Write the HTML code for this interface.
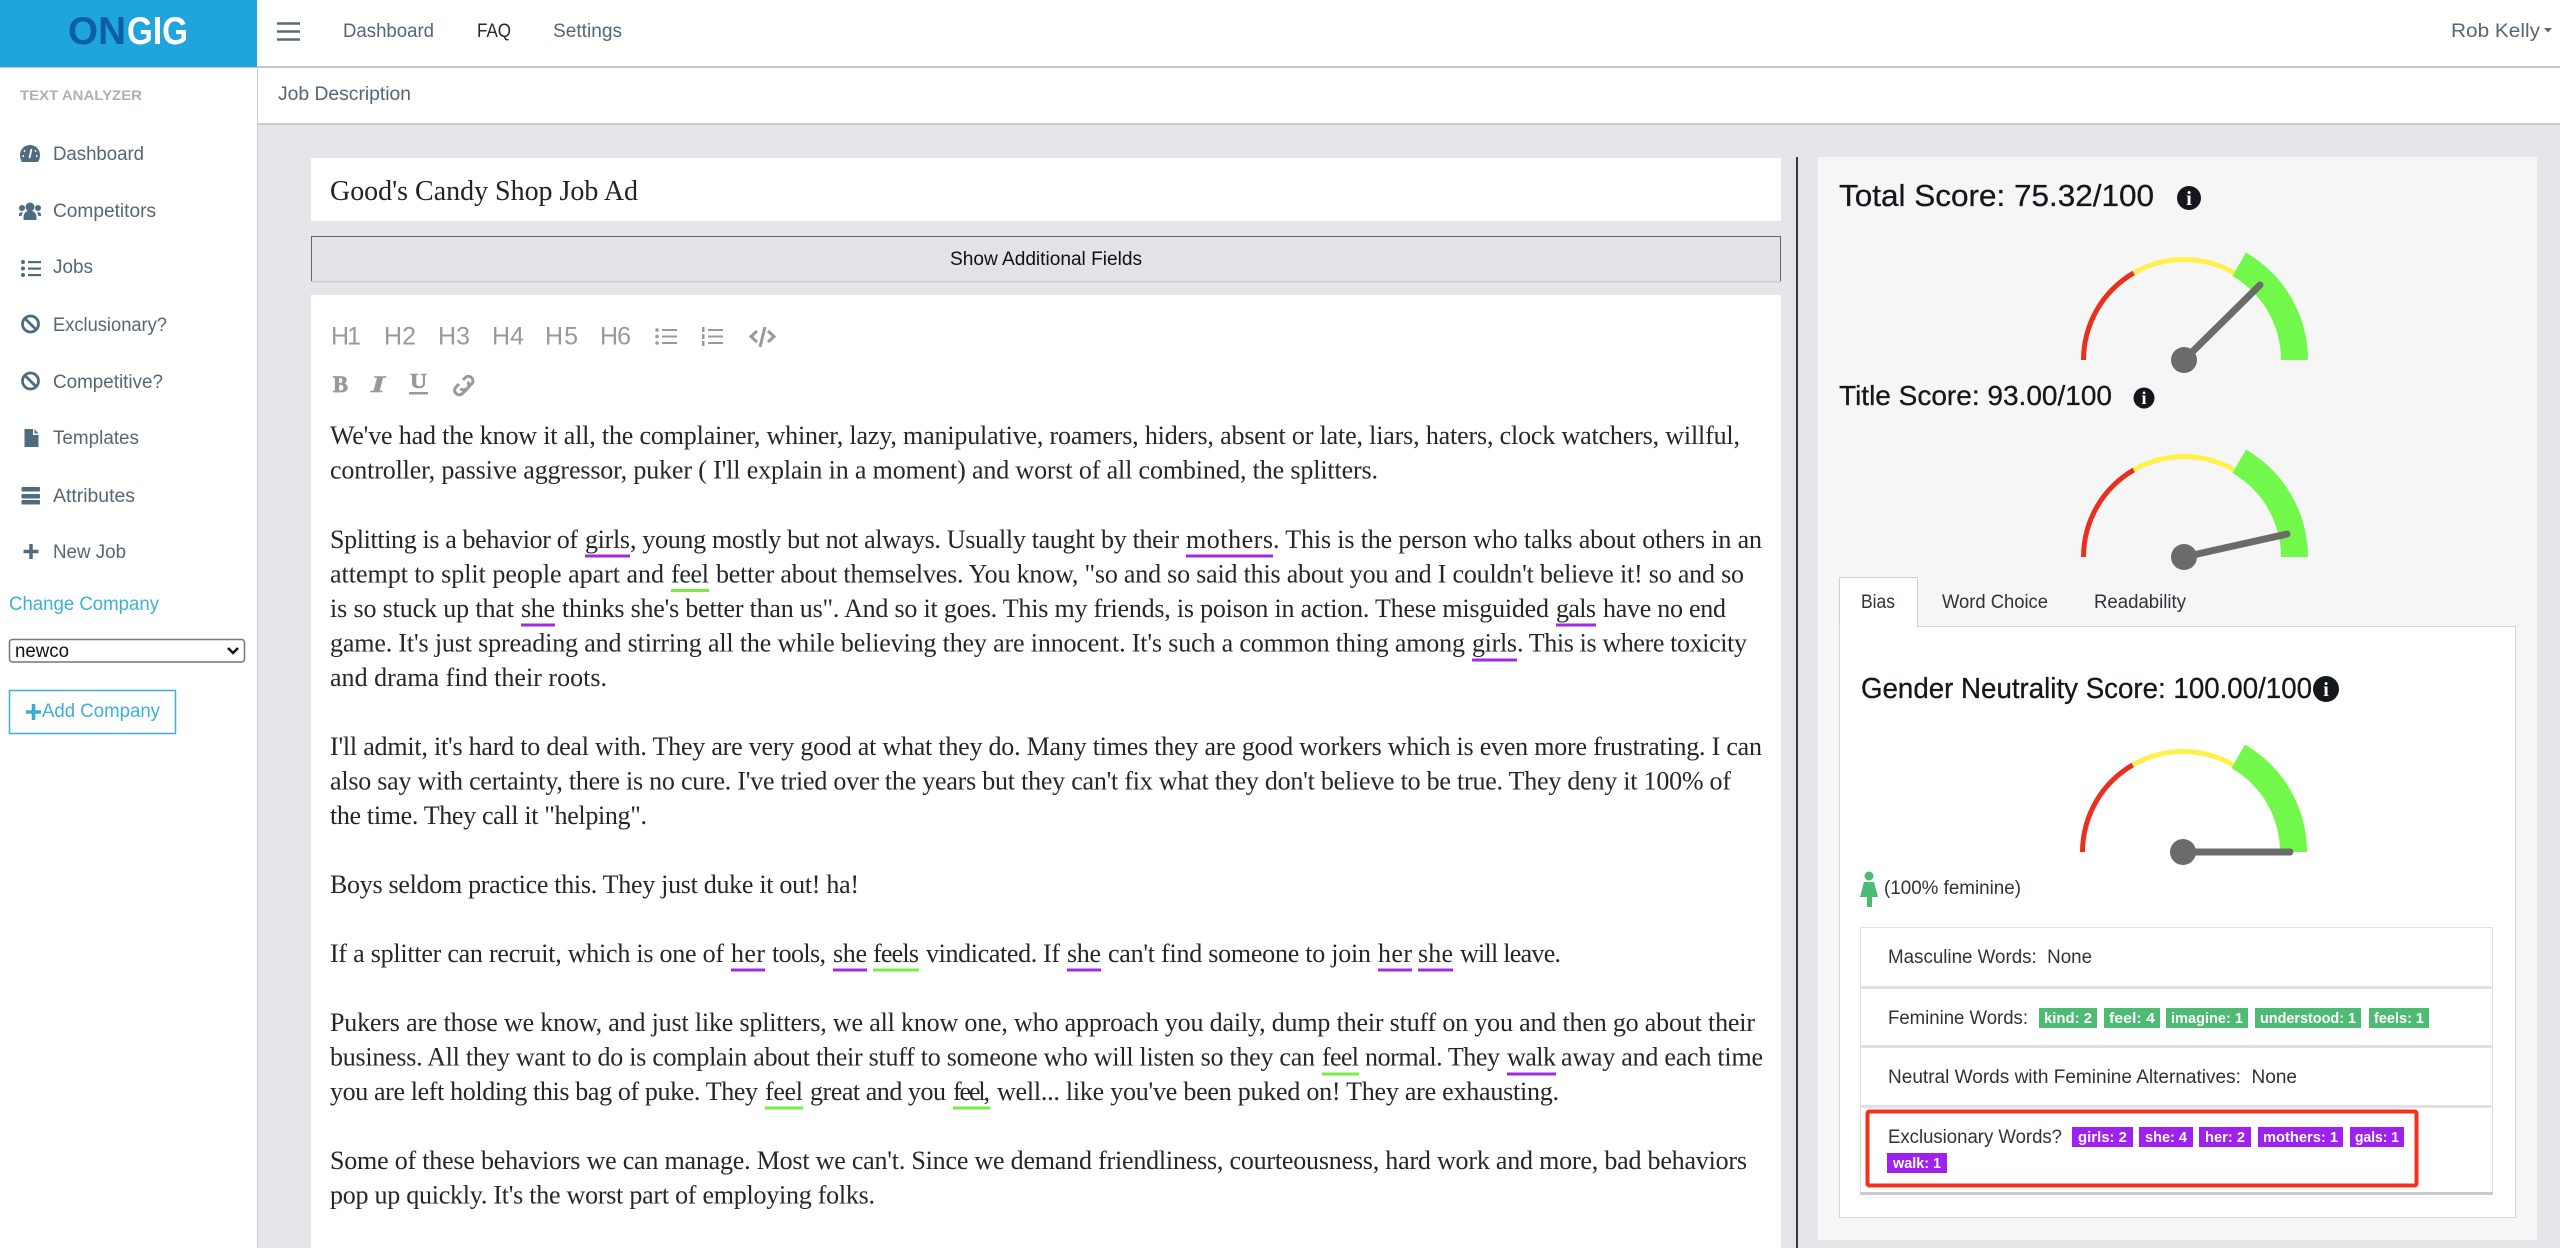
<!DOCTYPE html>
<html lang="en"><head><meta charset="utf-8"><title>Ongig Text Analyzer</title>
<style>
html,body{margin:0;padding:0;background:#e4e6e9;width:2560px;height:1248px;overflow:hidden}
svg{display:block}
text{white-space:pre}
.s{font-family:"Liberation Sans",sans-serif;font-size:19px;fill:#566673}
.b{font-family:"Liberation Serif",serif;font-size:26px;fill:#262626}
.d{font-family:"Liberation Sans",sans-serif;font-size:19px;fill:#2d3338}
.h{font-family:"Liberation Sans",sans-serif;font-size:31px;fill:#14181d;stroke:#14181d;stroke-width:.3px}
.t{font-family:"Liberation Sans",sans-serif;font-size:25px;fill:#999}
.g{font-family:"Liberation Sans",sans-serif;font-size:15px;font-weight:bold;fill:#fff}
.ic{fill:#4f6b80}
</style></head><body>
<svg xmlns="http://www.w3.org/2000/svg" width="2560" height="1248" viewBox="0 0 2560 1248">
<!-- backgrounds -->
<rect width="2560" height="1248" fill="#e4e6e9"/>
<rect x="0" y="0" width="2560" height="67" fill="#fff"/>
<rect x="0" y="66" width="2560" height="2" fill="#c3c9ce"/>
<rect x="0" y="0" width="257" height="67" fill="#1fa5db"/>
<rect x="0" y="68" width="257" height="1180" fill="#fff"/>
<rect x="257" y="68" width="1" height="1180" fill="#c8ced3"/>
<rect x="258" y="68" width="2302" height="56" fill="#fff"/>
<rect x="258" y="123" width="2302" height="2" fill="#c8ced3"/>
<!-- logo -->
<text x="68" y="44" textLength="58" lengthAdjust="spacingAndGlyphs" font-family="Liberation Sans, sans-serif" font-size="39" font-weight="bold" fill="#0d5ea4">ON</text>
<text x="127" y="44" textLength="61" lengthAdjust="spacingAndGlyphs" font-family="Liberation Sans, sans-serif" font-size="39" font-weight="bold" fill="#fff">GIG</text>
<!-- top nav -->
<path d="M277 23.500H300M277 31.500H300M277 39.500H300" stroke="#5c6b77" stroke-width="2.500"/>
<text class="s" x="343" y="37" textLength="91" lengthAdjust="spacingAndGlyphs">Dashboard</text>
<text class="s" x="477" y="37" textLength="34" lengthAdjust="spacingAndGlyphs" style="fill:#23282c">FAQ</text>
<text class="s" x="553" y="37" textLength="69" lengthAdjust="spacingAndGlyphs">Settings</text>
<text class="s" x="2451" y="37" textLength="89" lengthAdjust="spacingAndGlyphs">Rob Kelly</text>
<path d="M2544 28l8 0l-4 4.500z" fill="#566673"/>
<text class="s" x="278" y="100" textLength="133" lengthAdjust="spacingAndGlyphs">Job Description</text>
<!-- sidebar -->
<text x="20" y="100" textLength="122" lengthAdjust="spacingAndGlyphs" font-family="Liberation Sans, sans-serif" font-size="14" font-weight="bold" fill="#a9b1b7">TEXT ANALYZER</text>
<text class="s" x="53" y="160" textLength="91" lengthAdjust="spacingAndGlyphs">Dashboard</text>
<text class="s" x="53" y="217" textLength="103" lengthAdjust="spacingAndGlyphs">Competitors</text>
<text class="s" x="53" y="273" textLength="40" lengthAdjust="spacingAndGlyphs">Jobs</text>
<text class="s" x="53" y="331" textLength="114" lengthAdjust="spacingAndGlyphs">Exclusionary?</text>
<text class="s" x="53" y="388" textLength="110" lengthAdjust="spacingAndGlyphs">Competitive?</text>
<text class="s" x="53" y="444" textLength="86" lengthAdjust="spacingAndGlyphs">Templates</text>
<text class="s" x="53" y="502" textLength="82" lengthAdjust="spacingAndGlyphs">Attributes</text>
<text class="s" x="53" y="558" textLength="73" lengthAdjust="spacingAndGlyphs">New Job</text>
<!-- sidebar icons -->
<path class="ic" d="M30 145a10 10 0 0 0-10 10c0 2.800.8 5.200 2 7h16c1.200-1.800 2-4.200 2-7a10 10 0 0 0-10-10z"/>
<path d="M29.500 158l2-9M24 150.500l1 1M36 150.500l-1 1M22.500 156h1.500M36 156h1.500" stroke="#fff" stroke-width="1.800"/>
<g class="ic"><circle cx="30" cy="207" r="4.500"/><circle cx="22" cy="208" r="3"/><circle cx="38" cy="208" r="3"/><path d="M23.500 220v-3a6 6 0 0 1 13 0v3zM19 216v-2a3 3 0 0 1 4-1.500 8 8 0 0 0-1.500 3.500zM41 216v-2a3 3 0 0 0-4-1.500 8 8 0 0 1 1.500 3.500z"/></g>
<g class="ic"><circle cx="23" cy="262" r="2"/><circle cx="23" cy="268.500" r="2"/><circle cx="23" cy="275" r="2"/><rect x="28" y="261" width="13" height="2.200"/><rect x="28" y="267.500" width="13" height="2.200"/><rect x="28" y="274" width="13" height="2.200"/></g>
<g fill="none" stroke="#4f6b80" stroke-width="2.800"><circle cx="30.500" cy="324" r="8"/><path d="M25 318.500l11 11"/><circle cx="30.500" cy="381" r="8"/><path d="M25 375.500l11 11"/></g>
<path class="ic" d="M24.500 429h8.500v6h5.500v12h-14z"/><path d="M34.500 429l4 4.500h-4z" class="ic"/>
<g class="ic"><rect x="21.500" y="487" width="18.500" height="4.500" rx="1"/><rect x="21.500" y="494" width="18.500" height="4.500" rx="1"/><rect x="21.500" y="500" width="18.500" height="4.500" rx="1"/></g>
<path d="M31 544v15M23.500 551.500h15" stroke="#4f6b80" stroke-width="3.500"/>
<!-- company -->
<text x="9" y="610" textLength="150" lengthAdjust="spacingAndGlyphs" font-family="Liberation Sans, sans-serif" font-size="19" fill="#3fb0d5">Change Company</text>
<rect x="9.500" y="639.500" width="235" height="22.500" rx="3" fill="#fff" stroke="#777" stroke-width="1.500"/>
<text x="15" y="657" textLength="54" lengthAdjust="spacingAndGlyphs" font-family="Liberation Sans, sans-serif" font-size="19" fill="#111">newco</text>
<path d="M228 648l5 5 5-5" fill="none" stroke="#111" stroke-width="2.500"/>
<rect x="9.500" y="690.500" width="166" height="43" fill="#fff" stroke="#3fb0d5" stroke-width="1.500"/>
<path d="M33.500 704v16M26 712h15" stroke="#35aed6" stroke-width="3.500"/>
<text x="42" y="717" textLength="118" lengthAdjust="spacingAndGlyphs" font-family="Liberation Sans, sans-serif" font-size="19" fill="#3fb0d5">Add Company</text>
<!-- title card -->
<rect x="311" y="158" width="1470" height="63" fill="#fff"/>
<text x="330" y="200" textLength="308" lengthAdjust="spacingAndGlyphs" font-family="Liberation Serif, serif" font-size="29" fill="#222">Good's Candy Shop Job Ad</text>
<!-- show additional -->
<rect x="311" y="237" width="1470" height="44" fill="#e1e3e6"/>
<path d="M311.500 282V236.500H1780.500V282" fill="none" stroke="#666" stroke-width="1"/>
<rect x="311" y="281" width="1470" height="1.500" fill="#c8ccd1"/>
<text x="950" y="265" textLength="192" lengthAdjust="spacingAndGlyphs" font-family="Liberation Sans, sans-serif" font-size="19" fill="#111">Show Additional Fields</text>
<!-- editor -->
<rect x="311" y="295" width="1470" height="953" fill="#fff"/>
<text class="t" x="331" y="344.500" textLength="30">H1</text>
<text class="t" x="384" y="344.500" textLength="32">H2</text>
<text class="t" x="438" y="344.500" textLength="32">H3</text>
<text class="t" x="492" y="344.500" textLength="32">H4</text>
<text class="t" x="545" y="344.500" textLength="33">H5</text>
<text class="t" x="600" y="344.500" textLength="31">H6</text>
<g fill="#999"><circle cx="657" cy="330" r="1.800"/><circle cx="657" cy="336.500" r="1.800"/><circle cx="657" cy="343" r="1.800"/><rect x="662" y="329" width="15" height="2"/><rect x="662" y="335.500" width="15" height="2"/><rect x="662" y="342" width="15" height="2"/><rect x="702" y="327" width="2.500" height="5"/><rect x="702" y="334" width="2.500" height="5"/><rect x="702" y="341" width="2.500" height="5"/><rect x="708" y="329" width="15" height="2"/><rect x="708" y="335.500" width="15" height="2"/><rect x="708" y="342" width="15" height="2"/></g>
<path d="M757 331l-6 5.500 6 5.500M768 331l6 5.500-6 5.500M765 327l-5 20" fill="none" stroke="#999" stroke-width="3"/>
<text x="333" y="392" textLength="15" lengthAdjust="spacingAndGlyphs" stroke="#999" stroke-width=".8" font-family="Liberation Serif, serif" font-weight="bold" font-size="23" fill="#999">B</text>
<text x="371" y="392" textLength="14" lengthAdjust="spacingAndGlyphs" stroke="#999" stroke-width=".6" font-family="Liberation Serif, serif" font-weight="bold" font-style="italic" font-size="23" fill="#999">I</text>
<text x="410" y="388" textLength="17" lengthAdjust="spacingAndGlyphs" stroke="#999" stroke-width=".6" font-family="Liberation Serif, serif" font-weight="bold" font-size="21" fill="#999">U</text>
<rect x="409" y="392" width="19" height="2.500" fill="#999"/>
<path d="M461 386l-3 3a4.500 4.500 0 0 0 6.500 6.500l5-5a4.500 4.500 0 0 0 0-6.500M465 382l3-3a4.500 4.500 0 0 1 6 6.500l-5 5a4.500 4.500 0 0 1-6.500 0" transform="translate(-2 -2)" fill="none" stroke="#999" stroke-width="3"/>
<!-- body -->
<text class="b" x="330" y="444" textLength="1410">We've had the know it all, the complainer, whiner, lazy, manipulative, roamers, hiders, absent or late, liars, haters, clock watchers, willful,</text>
<text class="b" x="330" y="478.500" textLength="1048">controller, passive aggressor, puker ( I'll explain in a moment) and worst of all combined, the splitters.</text>

<text class="b" x="330" y="548" textLength="248">Splitting is a behavior of</text>
<text class="b" x="585" y="548" textLength="45">girls</text>
<text class="b" x="630" y="548" textLength="549">, young mostly but not always. Usually taught by their</text>
<text class="b" x="1186" y="548" textLength="87">mothers</text>
<text class="b" x="1273" y="548" textLength="489">. This is the person who talks about others in an</text>

<text class="b" x="330" y="582.500" textLength="334">attempt to split people apart and</text>
<text class="b" x="671" y="582.500" textLength="38">feel</text>
<text class="b" x="716" y="582.500" textLength="1028">better about themselves. You know, "so and so said this about you and I couldn't believe it! so and so</text>

<text class="b" x="330" y="617" textLength="184">is so stuck up that</text>
<text class="b" x="521" y="617" textLength="34">she</text>
<text class="b" x="562" y="617" textLength="987">thinks she's better than us". And so it goes. This my friends, is poison in action. These misguided</text>
<text class="b" x="1556" y="617" textLength="40">gals</text>
<text class="b" x="1603" y="617" textLength="123">have no end</text>

<text class="b" x="330" y="651.500" textLength="1135">game. It's just spreading and stirring all the while believing they are innocent. It's such a common thing among</text>
<text class="b" x="1472" y="651.500" textLength="45">girls</text>
<text class="b" x="1517" y="651.500" textLength="230">. This is where toxicity</text>

<text class="b" x="330" y="686" textLength="277">and drama find their roots.</text>
<text class="b" x="330" y="755" textLength="1432">I'll admit, it's hard to deal with. They are very good at what they do. Many times they are good workers which is even more frustrating. I can</text>
<text class="b" x="330" y="789.500" textLength="1401">also say with certainty, there is no cure. I've tried over the years but they can't fix what they don't believe to be true. They deny it 100% of</text>
<text class="b" x="330" y="824" textLength="317">the time. They call it "helping".</text>
<text class="b" x="330" y="893" textLength="529">Boys seldom practice this. They just duke it out! ha!</text>

<text class="b" x="330" y="962" textLength="394">If a splitter can recruit, which is one of</text>
<text class="b" x="731" y="962" textLength="34">her</text>
<text class="b" x="772" y="962" textLength="54">tools,</text>
<text class="b" x="833" y="962" textLength="34">she</text>
<text class="b" x="873" y="962" textLength="46">feels</text>
<text class="b" x="926" y="962" textLength="134">vindicated. If</text>
<text class="b" x="1067" y="962" textLength="34">she</text>
<text class="b" x="1108" y="962" textLength="263">can't find someone to join</text>
<text class="b" x="1378" y="962" textLength="34">her</text>
<text class="b" x="1418" y="962" textLength="35">she</text>
<text class="b" x="1460" y="962" textLength="101">will leave.</text>

<text class="b" x="330" y="1031" textLength="1425">Pukers are those we know, and just like splitters, we all know one, who approach you daily, dump their stuff on you and then go about their</text>

<text class="b" x="330" y="1065.500" textLength="985">business. All they want to do is complain about their stuff to someone who will listen so they can</text>
<text class="b" x="1322" y="1065.500" textLength="37">feel</text>
<text class="b" x="1365" y="1065.500" textLength="135">normal. They</text>
<text class="b" x="1507" y="1065.500" textLength="49">walk</text>
<text class="b" x="1561" y="1065.500" textLength="202">away and each time</text>

<text class="b" x="330" y="1100" textLength="428">you are left holding this bag of puke. They</text>
<text class="b" x="765" y="1100" textLength="38">feel</text>
<text class="b" x="810" y="1100" textLength="136">great and you</text>
<text class="b" x="953" y="1100" textLength="37">feel,</text>
<text class="b" x="997" y="1100" textLength="562">well... like you've been puked on! They are exhausting.</text>

<text class="b" x="330" y="1169" textLength="1417">Some of these behaviors we can manage. Most we can't. Since we demand friendliness, courteousness, hard work and more, bad behaviors</text>
<text class="b" x="330" y="1203.500" textLength="545">pop up quickly. It's the worst part of employing folks.</text>
<!-- underlines -->
<g fill="#a02be0">
<rect x="585" y="554.500" width="45" height="3"/><rect x="1186" y="554.500" width="87" height="3"/>
<rect x="521" y="623.500" width="34" height="3"/><rect x="1556" y="623.500" width="40" height="3"/>
<rect x="1472" y="658.500" width="45" height="3"/>
<rect x="731" y="968.500" width="34" height="3"/><rect x="833" y="968.500" width="34" height="3"/><rect x="1067" y="968.500" width="34" height="3"/><rect x="1378" y="968.500" width="34" height="3"/><rect x="1418" y="968.500" width="35" height="3"/>
<rect x="1507" y="1072.500" width="49" height="3"/>
</g>
<g fill="#75ee45">
<rect x="671" y="589" width="38" height="3"/><rect x="873" y="968.500" width="46" height="3"/>
<rect x="1322" y="1072.500" width="37" height="3"/><rect x="765" y="1106.500" width="38" height="3"/><rect x="953" y="1106.500" width="37" height="3"/>
</g>
<!-- divider and panel -->
<rect x="1796" y="157" width="2" height="1091" fill="#33383c"/>
<rect x="1818" y="157" width="719" height="1083" fill="#f6f6f6"/>
<text class="h" x="1839" y="206" textLength="315" lengthAdjust="spacingAndGlyphs">Total Score: 75.32/100</text>
<circle cx="2189" cy="198" r="12" fill="#14181d"/>
<text x="2189" y="205" text-anchor="middle" font-family="Liberation Serif, serif" font-weight="bold" font-size="20" fill="#fff">i</text>
<g transform="translate(2184 360)">
<path d="M-103 0A103 103 0 0 1 -51.500 -89.200L-49 -84.900A98 98 0 0 0 -98 0Z" fill="#e9301f"/>
<path d="M-51.500 -89.200A103 103 0 0 1 51.500 -89.200L49 -84.900A98 98 0 0 0 -49 -84.900Z" fill="#fdf14a"/>
<path d="M62 -107.400A124 124 0 0 1 124 0L97 0A97 97 0 0 0 48.500 -84Z" fill="#72f84a"/>
<path d="M0 0L76 -75" stroke="#6b6b6b" stroke-width="7" stroke-linecap="round"/>
<circle r="13" fill="#6b6b6b"/>
</g>
<text class="h" x="1839" y="405" textLength="273" lengthAdjust="spacingAndGlyphs" style="font-size:28px">Title Score: 93.00/100</text>
<circle cx="2144" cy="398" r="10.500" fill="#14181d"/>
<text x="2144" y="404" text-anchor="middle" font-family="Liberation Serif, serif" font-weight="bold" font-size="18" fill="#fff">i</text>
<g transform="translate(2184 557)">
<path d="M-103 0A103 103 0 0 1 -51.500 -89.200L-49 -84.900A98 98 0 0 0 -98 0Z" fill="#e9301f"/>
<path d="M-51.500 -89.200A103 103 0 0 1 51.500 -89.200L49 -84.900A98 98 0 0 0 -49 -84.900Z" fill="#fdf14a"/>
<path d="M62 -107.400A124 124 0 0 1 124 0L97 0A97 97 0 0 0 48.500 -84Z" fill="#72f84a"/>
<path d="M0 0L103 -23" stroke="#6b6b6b" stroke-width="7" stroke-linecap="round"/>
<circle r="13" fill="#6b6b6b"/>
</g>
<!-- tabs -->
<rect x="1839.500" y="626.500" width="676" height="591" fill="#fff" stroke="#d0d6db"/>
<path d="M1839.500 627V577.500H1917.500V627" fill="#fff" stroke="#c9d1d8"/>
<rect x="1840" y="625" width="77" height="3" fill="#fff"/>
<text class="d" x="1861" y="608" textLength="34" lengthAdjust="spacingAndGlyphs">Bias</text>
<text class="d" x="1942" y="608" textLength="106" lengthAdjust="spacingAndGlyphs">Word Choice</text>
<text class="d" x="2094" y="608" textLength="92" lengthAdjust="spacingAndGlyphs">Readability</text>
<text class="h" x="1861" y="698" textLength="451" lengthAdjust="spacingAndGlyphs" style="font-size:29px">Gender Neutrality Score: 100.00/100</text>
<circle cx="2326" cy="689" r="13" fill="#14181d"/>
<text x="2326" y="696" text-anchor="middle" font-family="Liberation Serif, serif" font-weight="bold" font-size="20" fill="#fff">i</text>
<g transform="translate(2183 852)">
<path d="M-103 0A103 103 0 0 1 -51.500 -89.200L-49 -84.900A98 98 0 0 0 -98 0Z" fill="#e9301f"/>
<path d="M-51.500 -89.200A103 103 0 0 1 51.500 -89.200L49 -84.900A98 98 0 0 0 -49 -84.900Z" fill="#fdf14a"/>
<path d="M62 -107.400A124 124 0 0 1 124 0L97 0A97 97 0 0 0 48.500 -84Z" fill="#72f84a"/>
<path d="M0 0L107 0" stroke="#6b6b6b" stroke-width="7" stroke-linecap="round"/>
<circle r="13" fill="#6b6b6b"/>
</g>
<circle cx="1869" cy="876" r="4.500" fill="#4dbb74"/>
<path d="M1864 882h10l4 15h-6v10h-5v-10h-7z" fill="#4dbb74"/>
<text class="d" x="1884" y="894" textLength="137" lengthAdjust="spacingAndGlyphs">(100% feminine)</text>
<!-- list -->
<rect x="1860.500" y="927.500" width="632" height="266" fill="#fff" stroke="#dfe1e3"/>
<rect x="1860" y="986" width="633" height="3" fill="#dfe1e3"/>
<rect x="1860" y="1045" width="633" height="3" fill="#dfe1e3"/>
<rect x="1860" y="1105" width="633" height="3" fill="#dfe1e3"/>
<rect x="1860" y="1192" width="633" height="3" fill="#c9cbcd"/>
<text class="d" x="1888" y="963" textLength="204" lengthAdjust="spacingAndGlyphs">Masculine Words:  None</text>
<text class="d" x="1888" y="1024" textLength="140" lengthAdjust="spacingAndGlyphs">Feminine Words:</text>
<text class="d" x="1888" y="1083" textLength="409" lengthAdjust="spacingAndGlyphs">Neutral Words with Feminine Alternatives:  None</text>
<text class="d" x="1888" y="1143" textLength="174" lengthAdjust="spacingAndGlyphs">Exclusionary Words?</text>
<g fill="#4dbb74"><rect x="2039" y="1008" width="58" height="20"/><rect x="2104" y="1008" width="56" height="20"/><rect x="2166" y="1008" width="82" height="20"/><rect x="2255" y="1008" width="106" height="20"/><rect x="2369" y="1008" width="60" height="20"/></g>
<text class="g" x="2044" y="1023" textLength="48" lengthAdjust="spacingAndGlyphs">kind: 2</text>
<text class="g" x="2109" y="1023" textLength="46" lengthAdjust="spacingAndGlyphs">feel: 4</text>
<text class="g" x="2171" y="1023" textLength="72" lengthAdjust="spacingAndGlyphs">imagine: 1</text>
<text class="g" x="2260" y="1023" textLength="96" lengthAdjust="spacingAndGlyphs">understood: 1</text>
<text class="g" x="2374" y="1023" textLength="50" lengthAdjust="spacingAndGlyphs">feels: 1</text>
<g fill="#a020f0"><rect x="2072" y="1127" width="61" height="20"/><rect x="2139" y="1127" width="54" height="20"/><rect x="2199" y="1127" width="52" height="20"/><rect x="2258" y="1127" width="85" height="20"/><rect x="2350" y="1127" width="54" height="20"/><rect x="1887" y="1153" width="60" height="20"/></g>
<text class="g" x="2078" y="1142" textLength="49" lengthAdjust="spacingAndGlyphs">girls: 2</text>
<text class="g" x="2145" y="1142" textLength="42" lengthAdjust="spacingAndGlyphs">she: 4</text>
<text class="g" x="2205" y="1142" textLength="40" lengthAdjust="spacingAndGlyphs">her: 2</text>
<text class="g" x="2263" y="1142" textLength="75" lengthAdjust="spacingAndGlyphs">mothers: 1</text>
<text class="g" x="2355" y="1142" textLength="44" lengthAdjust="spacingAndGlyphs">gals: 1</text>
<text class="g" x="1893" y="1168" textLength="48" lengthAdjust="spacingAndGlyphs">walk: 1</text>
<rect x="1867.500" y="1111.500" width="549" height="74" rx="2" fill="none" stroke="#f5301c" stroke-width="4"/>
</svg>
</body></html>
